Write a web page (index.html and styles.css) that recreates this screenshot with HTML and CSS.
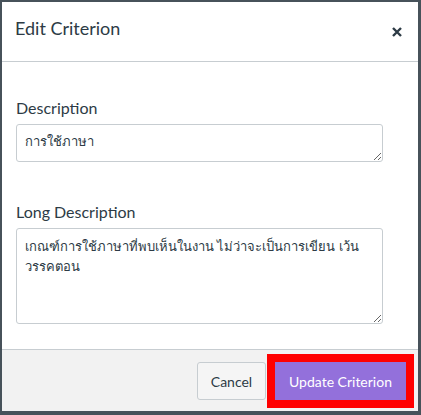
FILE: index.html
```html
<!DOCTYPE html>
<html lang="th">
<head>
<meta charset="utf-8">
<title>Edit Criterion</title>
<link rel="stylesheet" href="styles.css">
</head>
<body>
<div class="modal">
  <div class="modal-header">
    <h2 class="modal-title">Edit Criterion</h2>
    <button class="close-btn" aria-label="Close">
      <svg width="10" height="10" viewBox="0 0 10 10"><path d="M1 1L9 9M9 1L1 9" stroke="#2d3b45" stroke-width="2.4" stroke-linecap="butt"/></svg>
    </button>
  </div>
  <div class="modal-body">
    <label class="field-label">Description</label>
    <textarea class="field short">การใช้ภาษา</textarea>
    <label class="field-label second">Long Description</label>
    <textarea class="field long">เกณฑ์การใช้ภาษาที่พบเห็นในงาน ไม่ว่าจะเป็นการเขียน เว้น
วรรคตอน</textarea>
  </div>
  <div class="modal-footer">
    <button class="btn btn-cancel">Cancel</button>
    <button class="btn btn-primary">Update Criterion</button>
  </div>
</div>
</body>
</html>
```

FILE: styles.css
```css
html, body {
  margin: 0;
  padding: 0;
}
body {
  background: #47525a;
  width: 421px;
  height: 415px;
  overflow: hidden;
  font-family: Lato, "Noto Sans", sans-serif;
  color: #2d3b45;
}
.modal {
  margin: 2px 0 0 2px;
  width: 416px;
  height: 409px;
  background: #fff;
  display: flex;
  flex-direction: column;
}
.modal-header {
  box-sizing: border-box;
  height: 60px;
  padding: 16px 15px 0 13px;
  border-bottom: 1px solid #c7cdd1;
  display: flex;
  justify-content: space-between;
  align-items: flex-start;
}
.modal-title {
  margin: 0;
  font-size: 18px;
  font-weight: 400;
  line-height: 21.6px;
}
.close-btn {
  border: 0;
  background: none;
  padding: 0;
  margin: 9px 1px 0 0;
  width: 10px;
  height: 10px;
  display: flex;
}
.modal-body {
  flex: 1;
  box-sizing: border-box;
  padding: 36px 0 0 14px;
  display: flex;
  flex-direction: column;
  align-items: flex-start;
}
.field-label {
  font-size: 16px;
  line-height: 20px;
  margin-bottom: 6px;
}
.field-label.second {
  margin-top: 40px;
}
.field {
  box-sizing: border-box;
  width: 367px;
  border: 1px solid #c7cdd1;
  border-radius: 3px;
  padding: 6px 8px;
  font-family: Lato, "Noto Sans", sans-serif;
  font-size: 13px;
  line-height: 20px;
  color: #2d3b45;
  background: #fff;
  margin: 0;
  outline: none;
}
.field.short { height: 38px; }
.field.long { height: 96px; padding-top: 7px; }
.modal-footer {
  box-sizing: border-box;
  height: 62px;
  border-top: 1px solid #c7cdd1;
  background: #f2f2f2;
  padding: 12px 12px 0 0;
  display: flex;
  justify-content: flex-end;
  align-items: flex-start;
  gap: 9px;
}
.btn {
  box-sizing: border-box;
  height: 38px;
  border-radius: 3px;
  font-family: Lato, "Noto Sans", sans-serif;
  font-size: 14px;
  padding: 0;
  white-space: nowrap;
  cursor: pointer;
}
.btn-cancel {
  width: 69px;
  background: #f5f5f5;
  border: 1px solid #c7cdd1;
  color: #2d3b45;
}
.btn-primary {
  width: 131px;
  background: #9370db;
  border: 1px solid #9370db;
  border-radius: 0;
  color: #fff;
  outline: 8px solid #ff0000;
}
```
